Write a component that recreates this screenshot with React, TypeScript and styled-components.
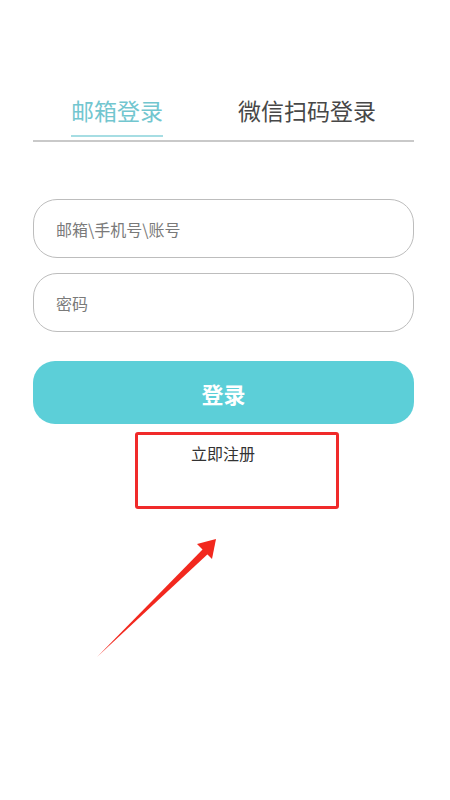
import React, { useState } from 'react';
import styled, { createGlobalStyle } from 'styled-components';

const GlobalStyle = createGlobalStyle`
    html, body {
        margin: 0;
        padding: 0;
        background: #ffffff;
    }
    body {
        font-family: "Noto Sans CJK SC", "Noto Sans", sans-serif;
    }
`;

const Page = styled.div`
    width: 450px;
    min-height: 800px;
    box-sizing: border-box;
    padding: 88px 36px 0 33px;
    display: flex;
    flex-direction: column;
`;

const TabBar = styled.div`
    display: flex;
    gap: 75px;
    padding-left: 38px;
    border-bottom: 2px solid #c9c9c9;
`;

const Tab = styled.div<{ $active?: boolean }>`
    font-size: 23px;
    line-height: 44px;
    color: ${(p) => (p.$active ? '#72c6cf' : '#474747')};
    padding-bottom: 3px;
    margin-bottom: 3px;
    border-bottom: 2px solid ${(p) => (p.$active ? '#a6dde3' : 'transparent')};
    cursor: pointer;
`;

const Form = styled.div`
    display: flex;
    flex-direction: column;
    gap: 15px;
    margin-top: 57px;
`;

const Field = styled.input`
    height: 59px;
    box-sizing: border-box;
    border: 1.5px solid #bdbdbd;
    border-radius: 24px;
    padding: 0 22px;
    font-family: inherit;
    font-size: 16px;
    color: #333;
    outline: none;
    &::placeholder {
        color: #7a7a7a;
    }
`;

const SubmitButton = styled.button`
    margin-top: 29px;
    height: 63px;
    border: none;
    border-radius: 22px;
    background: #5ccfd8;
    color: #ffffff;
    font-family: inherit;
    font-size: 22px;
    font-weight: 700;
    cursor: pointer;
`;

const Highlight = styled.div`
    align-self: flex-start;
    margin: 8px 0 0 102px;
    width: 204px;
    height: 77px;
    box-sizing: border-box;
    border: 3px solid #f02a2a;
    border-radius: 3px;
    display: flex;
    justify-content: center;
    padding: 7px 28px 0 0;
`;

const RegisterLink = styled.a`
    font-size: 16px;
    line-height: 22px;
    color: #333333;
    text-decoration: none;
    cursor: pointer;
`;

const Arrow = styled.svg`
    display: block;
    margin: 18px 0 0 60px;
`;

const App: React.FC = () => {
    const [tab, setTab] = useState<'email' | 'wechat'>('email');

    return (
        <>
            <GlobalStyle />
            <Page>
                <TabBar>
                    <Tab $active={tab === 'email'} onClick={() => setTab('email')}>
                        {'邮箱登录'}
                    </Tab>
                    <Tab $active={tab === 'wechat'} onClick={() => setTab('wechat')}>
                        {'微信扫码登录'}
                    </Tab>
                </TabBar>

                <Form>
                    <Field type='text' placeholder='邮箱\手机号\账号' />
                    <Field type='password' placeholder='密码' />
                </Form>

                <SubmitButton type='button'>{'登录'}</SubmitButton>

                <Highlight>
                    <RegisterLink>{'立即注册'}</RegisterLink>
                </Highlight>

                <Arrow width='130' height='135' viewBox='0 0 130 135'>
                    {/* tapered shaft, tail at bottom-left */}
                    <polygon points='4,130 112,20 117,25' fill='#f2281e' />
                    {/* arrow head */}
                    <polygon points='123,12 104,17 119,32' fill='#f2281e' />
                </Arrow>
            </Page>
        </>
    );
};

export default App;
